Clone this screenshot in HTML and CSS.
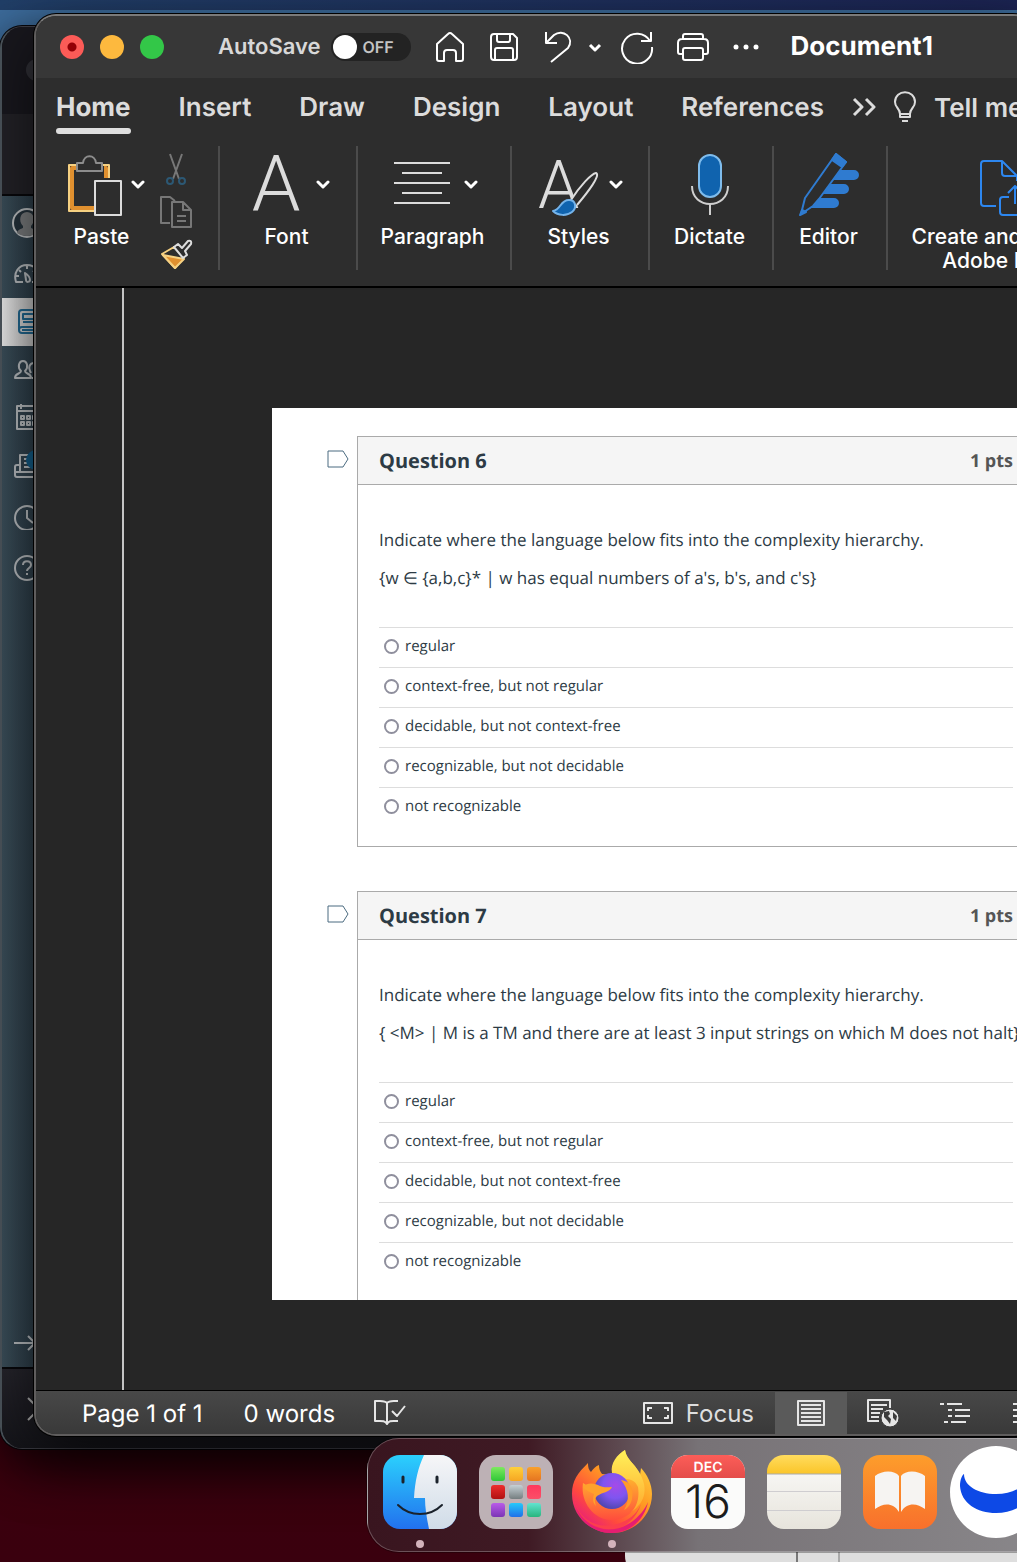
FILE: index.html
```html
<!DOCTYPE html>
<html lang="en">
<head>
    <meta charset="UTF-8">
    <meta name="viewport" content="width=device-width, initial-scale=1.0">
    <title>Document1</title>
    <link rel="stylesheet" href="styles.css">
</head>
<body>
<div class="desktop">
    <div class="sky"></div>

    <!-- browser window behind Word -->
    <div class="browser">
        <div class="browser-tabs"><span class="browser-tab"></span></div>
        <div class="browser-toolbar"></div>
        <nav class="browser-nav" aria-label="Courses">
            <a href="#" class="nav-item avatar" aria-label="Account"><svg width="30" height="30" viewBox="0 0 30 30"><circle cx="15" cy="15" r="14" fill="#24313a" stroke="#b9bcbe" stroke-width="2"/><path d="M5 25c1-4 4-4 6-5v-2c-5-5-3-14 4-14s9 9 4 14v2c2 1 5 1 6 5-5 4-15 4-20 0z" fill="#77797b" stroke="none"/></svg></a>
            <a href="#" class="nav-item" aria-label="Dashboard"><svg width="28" height="20" viewBox="0 0 28 20"><path d="M9 18H2C-1 8 5 1 13 1s14 7 12 17h-7M13 2v3M5 6l2 2M2 12h3M21 6l-2 2M11 9c3 2 5 5 5 7s-4 3-4 0z"/></svg></a>
            <a href="#" class="nav-item active" aria-label="Courses"><svg width="26" height="26" viewBox="0 0 26 26"><path d="M30 1H8Q5 1 5 4v17q0 3 3 3h22M5 21q0-3 3-3h22M8 21h22M9 5h14v5H9zM9 13h10"/></svg></a>
            <a href="#" class="nav-item" aria-label="Groups"><svg width="28" height="20" viewBox="0 0 28 20"><path d="M1 18c0-5 6-4 6-7-4-4-2-10 2-10s6 6 2 10c0 3 6 2 6 7zM17 13l-1-2c-2-4 0-8 4-8s5 6 2 9c0 2 4 2 4 6h-8"/></svg></a>
            <a href="#" class="nav-item" aria-label="Calendar"><svg width="28" height="28" viewBox="0 0 28 28"><path d="M3 2h24v23H3zM3 7h24M7 0v5M20 0v5M7 12h3v3H7zM13 12h3v3h-3zM19 12h3v3h-3zM7 18h3v3H7zM13 18h3v3h-3zM19 18h3v3h-3z"/></svg></a>
            <a href="#" class="nav-item" aria-label="Inbox"><svg width="30" height="26" viewBox="0 0 30 26"><path d="M6 18V2h16v16M10 6h8M10 10h8M10 14h8M6 12H3q-2 0-2 2v8q0 2 2 2h26M1 19h5v-5M6 19h20"/></svg><span class="nav-badge"></span></a>
            <a href="#" class="nav-item tall" aria-label="History"><svg width="28" height="28" viewBox="0 0 28 28"><circle cx="13" cy="16" r="12"/><path d="M13 8v8l6 5"/></svg></a>
            <a href="#" class="nav-item tall" aria-label="Help"><svg width="28" height="28" viewBox="0 0 28 28"><circle cx="13" cy="14" r="12"/><path d="M9 11c0-5 8-5 8 0 0 3-4 3-4 6M13 19v2"/></svg></a>
            <a href="#" class="nav-item last" aria-label="Expand"><svg width="28" height="20" viewBox="0 0 28 20"><path d="M0 10h20M14 3l7 7-7 7"/></svg></a>
        </nav>
        <div class="browser-foot"><svg width="28" height="28" viewBox="0 0 28 28"><path d="M2 3l22 22M24 3L2 25"/></svg></div>
    </div>

    <!-- lower window, mostly under the dock -->
    <div class="sheet"><span></span><span></span></div>

    <div class="word">
        <header class="titlebar">
            <div class="lights">
                <button class="light red" aria-label="Close"></button>
                <button class="light yellow" aria-label="Minimize"></button>
                <button class="light green" aria-label="Zoom"></button>
            </div>
            <label class="autosave">AutoSave
                <input type="checkbox" class="switch-input">
                <span class="switch">OFF</span>
            </label>
            <div class="quick">
                <button aria-label="Home"><svg width="32" height="32" viewBox="0 0 32 32"><path d="M3 13 14 3q2-2 4 0l11 10v15q0 2-2 2h-5v-8q0-3-3-3h-6q-3 0-3 3v8H5q-2 0-2-2z"/></svg></button>
                <button aria-label="Save"><svg width="32" height="32" viewBox="0 0 32 32"><path d="M6 3h19l4 4v19q0 3-3 3H6q-3 0-3-3V6q0-3 3-3zM9 3v6q0 2 2 2h9q2 0 2-2V3M7 29V19q0-2 2-2h14q2 0 2 2v10"/></svg></button>
                <button aria-label="Undo"><svg width="32" height="32" viewBox="0 0 32 32"><path d="M4 1v11h11M4 12l8-8c9-7 21 3 14 13L9 31"/></svg></button>
                <button class="narrow" aria-label="Undo history"><svg width="14" height="32" viewBox="0 0 14 32"><path d="M2 14l5 5 5-5" stroke-width="3"/></svg></button>
                <button aria-label="Redo"><svg width="34" height="34" viewBox="0 0 34 34"><path d="M31 2v9H21M30 11A15 15 0 1 0 32 17"/></svg></button>
                <button aria-label="Print"><svg width="34" height="32" viewBox="0 0 34 32"><path d="M7 8V5q0-2 2-2h16q2 0 2 2v3M7 23H4q-2 0-2-2v-9q0-4 4-4h22q4 0 4 4v9q0 2-2 2h-3M9 17h16q2 0 2 2v8q0 2-2 2H9q-2 0-2-2v-8q0-2 2-2z"/></svg></button>
                <button aria-label="More"><svg width="28" height="32" viewBox="0 0 28 32"><g fill="#fff" stroke="none"><circle cx="4" cy="16" r="2.500"/><circle cx="14" cy="16" r="2.500"/><circle cx="24" cy="16" r="2.500"/></g></svg></button>
            </div>
            <h1 class="doc-title">Document1</h1>
        </header>

        <nav class="tabs">
            <a href="#" class="tab current">Home</a>
            <a href="#" class="tab">Insert</a>
            <a href="#" class="tab">Draw</a>
            <a href="#" class="tab">Design</a>
            <a href="#" class="tab">Layout</a>
            <a href="#" class="tab">References</a>
            <button class="more-tabs" aria-label="More tabs"><svg width="24" height="20" viewBox="0 0 24 20"><path d="M2 2l8 8-8 8M14 2l8 8-8 8" stroke="#dcdcdc" stroke-width="3"/></svg></button>
            <button class="tell"><svg width="22" height="32" viewBox="0 0 22 32"><path d="M6 23c0-6-5-6-5-12 0-13 20-13 20 0 0 6-5 6-5 12v3H6zM6 23h10M8 30h6" stroke="#dcdcdc"/></svg>Tell me</button>
        </nav>

        <div class="ribbon">
            <div class="group paste">
                <button class="tool">
                    <span class="tool-icon"><svg width="56" height="64" viewBox="0 0 56 64"><path d="M17 12H3v46h26M34 12h9v13" stroke="#f6d182" stroke-width="2"/><path d="M12 15H6v40h23M38 15h2v10" stroke="#e0902f" stroke-width="4"/><path d="M11 10h6c1-9 12-9 13 0h6v8H11z" fill="#2d2d2d" stroke="#8d8d8d" stroke-width="2"/><path d="M29 28h26v34H29z" fill="#2d2d2d" stroke="#dcdcdc" stroke-width="2"/></svg><svg class="chev" width="14" height="10" viewBox="0 0 14 10"><path d="M2 2l5 5 5-5"/></svg></span>
                    <span class="tool-label">Paste</span>
                </button>
                <div class="clip-tools">
                    <button aria-label="Cut"><svg width="32" height="34" viewBox="0 0 32 34"><path d="M10 2l9 25M22 2l-9 25" stroke="#777"/><circle cx="10" cy="29" r="3" stroke="#2c5874"/><circle cx="22" cy="29" r="3" stroke="#2c5874"/></svg></button>
                    <button aria-label="Copy"><svg width="32" height="34" viewBox="0 0 32 34"><path d="M10 28H1V2h9l5 4M12 7h11l8 8v17H12zM23 7v8h8M17 21h9M17 26h9" stroke="#777"/></svg></button>
                    <button aria-label="Format painter"><svg width="34" height="32" viewBox="0 0 34 32"><path d="M14 9L2 16l13 14 9-11z" stroke="#f6d182"/><path d="M3 17l21 4-9 9z" fill="#e0902f" stroke="#f6d182"/><path d="M14 9l4-3 4 4 6-7q4-1 3 3l-6 7 2 4-4 3z" fill="#2d2d2d" stroke="#dcdcdc"/></svg></button>
                </div>
            </div>
            <div class="group font">
                <button class="tool">
                    <span class="tool-icon"><span class="letter">A</span><svg class="chev" width="14" height="10" viewBox="0 0 14 10"><path d="M2 2l5 5 5-5"/></svg></span>
                    <span class="tool-label">Font</span>
                </button>
            </div>
            <div class="group paragraph">
                <button class="tool">
                    <span class="tool-icon"><svg width="56" height="64" viewBox="0 0 56 64"><path d="M0 10h56M8 20h40M0 30h56M8 40h40M0 50h56" stroke="#dcdcdc"/></svg><svg class="chev" width="14" height="10" viewBox="0 0 14 10"><path d="M2 2l5 5 5-5"/></svg></span>
                    <span class="tool-label">Paragraph</span>
                </button>
            </div>
            <div class="group styles">
                <button class="tool">
                    <span class="tool-icon"><svg width="62" height="64" viewBox="0 0 62 64"><text x="1" y="55" class="svg-letter">A</text><path d="M34 47C43 33 54 21 59 20c5 2-8 19-19 32" fill="#2d2d2d" stroke="#dcdcdc"/><path d="M16 58c8-1 7-11 16-11 7 0 8 8 3 12-5 4-14 4-19-1z" fill="#1063ae" stroke="#74b3ea"/></svg><svg class="chev" width="14" height="10" viewBox="0 0 14 10"><path d="M2 2l5 5 5-5"/></svg></span>
                    <span class="tool-label">Styles</span>
                </button>
            </div>
            <div class="group dictate">
                <button class="tool">
                    <span class="tool-icon"><svg width="40" height="64" viewBox="0 0 40 64"><rect x="8" y="2" width="22" height="42" rx="11" fill="#1063ae" stroke="#7fbcec"/><path d="M1 33c0 24 36 24 36 0M19 51v11" stroke="#cfcfcf"/></svg></span>
                    <span class="tool-label">Dictate</span>
                </button>
            </div>
            <div class="group editor">
                <button class="tool">
                    <span class="tool-icon"><svg width="62" height="64" viewBox="0 0 62 64"><path d="M38 17h17a5 5 0 0 1 0 10H30zM28 31h17a5 5 0 0 1 0 10H20zM18 45h17a5 5 0 0 1 0 10H10z" fill="#2f7bd0" stroke="none"/><path d="M37 1l10 8-27 37-6 7-12 8 4-16z" fill="#2d2d2d" stroke="#2f7bd0"/><path d="M37 1l10 8-4 5-10-7zM3 57l4 2-6 3z" fill="#2f7bd0" stroke="#2f7bd0"/></svg></span>
                    <span class="tool-label">Editor</span>
                </button>
            </div>
            <div class="group adobe">
                <button class="tool">
                    <span class="tool-icon"><svg width="58" height="64" viewBox="0 0 58 64"><path d="M16 53H4q-3 0-3-3V11q0-3 3-3h18l15 15v5M22 8v12q0 3 3 3h12M29 44h-6q-3 0-3 3v12q0 3 3 3h28q3 0 3-3V47q0-3-3-3h-6M35 51V34M28 40l7-7 7 7" stroke="#2d87f0"/></svg></span>
                    <span class="tool-label">Create and Share<br>Adobe PDF</span>
                </button>
            </div>
        </div>

        <main class="canvas">
            <div class="page">
                <section class="question">
                    <button class="flag" aria-label="Flag question 6"><svg width="22" height="18" viewBox="0 0 22 18"><path d="M1 1h15l5 8-5 8H1z"/></svg></button>
                    <div class="question-box">
                        <div class="question-head">
                            <h2>Question 6</h2>
                            <span class="points">1 pts</span>
                        </div>
                        <div class="question-body">
                            <p>Indicate where the language below fits into the complexity hierarchy.</p>
                            <p>{w ∈ {a,b,c}* | w has equal numbers of a's, b's, and c's}</p>
                            <div class="answers">
                                <label class="answer"><input type="radio" name="q6">regular</label>
                                <label class="answer"><input type="radio" name="q6">context-free, but not regular</label>
                                <label class="answer"><input type="radio" name="q6">decidable, but not context-free</label>
                                <label class="answer"><input type="radio" name="q6">recognizable, but not decidable</label>
                                <label class="answer"><input type="radio" name="q6">not recognizable</label>
                            </div>
                        </div>
                    </div>
                </section>
                <section class="question cut">
                    <button class="flag" aria-label="Flag question 7"><svg width="22" height="18" viewBox="0 0 22 18"><path d="M1 1h15l5 8-5 8H1z"/></svg></button>
                    <div class="question-box">
                        <div class="question-head">
                            <h2>Question 7</h2>
                            <span class="points">1 pts</span>
                        </div>
                        <div class="question-body">
                            <p>Indicate where the language below fits into the complexity hierarchy.</p>
                            <p>{ &lt;M&gt; | M is a TM and there are at least 3 input strings on which M does not halt}</p>
                            <div class="answers">
                                <label class="answer"><input type="radio" name="q7">regular</label>
                                <label class="answer"><input type="radio" name="q7">context-free, but not regular</label>
                                <label class="answer"><input type="radio" name="q7">decidable, but not context-free</label>
                                <label class="answer"><input type="radio" name="q7">recognizable, but not decidable</label>
                                <label class="answer"><input type="radio" name="q7">not recognizable</label>
                            </div>
                        </div>
                    </div>
                </section>
            </div>
        </main>

        <footer class="statusbar">
            <span>Page 1 of 1</span>
            <span class="words">0 words</span>
            <button class="proof" aria-label="Proofing"><svg width="32" height="28" viewBox="0 0 32 28"><path d="M13 4c-2-3-6-2-12-2v20c6 0 10-1 12 3 2-4 5-3 11-3M13 4v20M13 4c2-3 6-2 11-2M18 12l5 5 8-10"/></svg></button>
            <div class="views">
                <button class="focus"><svg width="30" height="22" viewBox="0 0 30 22"><path d="M1 1h28v20H1zM9 6H5v3M21 6h4v3M9 16H5v-3M21 16h4v-3"/></svg>Focus</button>
                <button class="view on" aria-label="Print layout"><svg width="28" height="26" viewBox="0 0 28 26"><path d="M1 1h26v24H1zM4 5h20M4 9h20M4 13h20M4 17h20M4 21h20"/></svg></button>
                <button class="view" aria-label="Web layout"><svg width="32" height="28" viewBox="0 0 32 28"><path d="M12 22H1V1h22v8M4 6h16M4 10h12M4 14h9M4 18h8"/><circle cx="23" cy="19" r="9" fill="#e6e6e6" stroke="#3c3c3c" stroke-width="1"/><path d="M17 13l5-1 1 3-2 2 3 3-1 5-3-4-3-3zM26 13l4 4-1 5-3-3z" fill="#3c3c3c" stroke="none"/></svg></button>
                <button class="view" aria-label="Outline"><svg width="30" height="22" viewBox="0 0 30 22"><path d="M0 2h4M7 2h15M8 8h4M15 8h15M8 14h4M15 14h15M4 20h4M11 20h15"/></svg></button>
                <button class="view" aria-label="Draft"><svg width="26" height="22" viewBox="0 0 26 22"><path d="M0 2h24M0 8h16M0 14h24M0 20h16"/></svg></button>
            </div>
        </footer>
    </div>

    <nav class="dock" aria-label="Dock">
        <a href="#" class="app running" aria-label="Finder">
            <svg width="74" height="74" viewBox="0 0 74 74"><defs><linearGradient id="fb" x2="0" y2="1"><stop stop-color="#2bd0fd"/><stop offset="1" stop-color="#2271ee"/></linearGradient><linearGradient id="fw" x2="0" y2="1"><stop stop-color="#f6f6f8"/><stop offset="1" stop-color="#d0dce8"/></linearGradient><clipPath id="fc"><rect width="74" height="74" rx="17"/></clipPath></defs><g clip-path="url(#fc)"><path fill="url(#fb)" d="M0 0h74v74H0z"/><path fill="url(#fw)" d="M41 0c-6 13-9 26-10 43h11c0 11 2 21 4 31h28V0z"/></g><path d="M20 22v5M54 22v5" fill="none" stroke="#1b222b" stroke-width="3" stroke-linecap="round"/><path d="M15 50c12 12 32 12 44 0" fill="none" stroke="#1b222b" stroke-width="2" stroke-linecap="round"/></svg>
        </a>
        <a href="#" class="app" aria-label="Launchpad">
            <span class="launchpad"><i class="c1"></i><i class="c2"></i><i class="c3"></i><i class="c4"></i><i class="c5"></i><i class="c6"></i><i class="c7"></i><i class="c8"></i><i class="c9"></i></span>
        </a>
        <a href="#" class="app wide running" aria-label="Firefox">
            <svg width="82" height="84" viewBox="0 0 82 84"><defs><linearGradient id="fx" x1="1" x2=".2" y2="1"><stop stop-color="#ffe84a"/><stop offset=".45" stop-color="#ff9a22"/><stop offset=".75" stop-color="#ff4a3d"/><stop offset="1" stop-color="#e31587"/></linearGradient><linearGradient id="fy" x2="0" y2="1"><stop stop-color="#fff25a"/><stop offset="1" stop-color="#ffa52b"/></linearGradient><linearGradient id="fo" x2="0" y2="1"><stop stop-color="#ffb02e"/><stop offset="1" stop-color="#ff4d3d"/></linearGradient><radialGradient id="fp" cx=".6" cy=".35" r=".7"><stop stop-color="#a44be8"/><stop offset=".5" stop-color="#7f55f0"/><stop offset="1" stop-color="#4a45a8"/></radialGradient></defs><path d="M17 14c0 5 1 7 3 9 2-3 5-6 8-7 0 4 1 6 3 9l11 1C40 16 46 6 54 1c2 12 10 12 15 25l1-7c6 6 11 16 11 26 0 22-18 39-40 39S1 67 1 45c0-14 6-21 16-31z" fill="url(#fx)"/><path d="M41 24C39 14 46 6 54 1c2 12 15 16 19 34 3 15-6 24-16 30 6-12 0-30-16-41z" fill="url(#fy)"/><path d="M3 46c2 24 23 35 43 29 11-3 20-10 24-20-5 16-20 28-36 25C16 77 4 64 3 46z" fill="#fb3f4c"/><path d="M5 58c9 22 34 29 54 16 9-6 15-14 18-21-3 17-18 31-36 31C24 84 10 74 5 58z" fill="#e51d72"/><path d="M12 34c-3 20 12 38 30 37 17-1 28-14 25-33-3-7-8-8-13-8L22 40z" fill="url(#fo)"/><circle cx="41" cy="42" r="18" fill="url(#fp)"/><path d="M12 38c4-5 12-4 17-1 4 2 9 1 12 1-2 5-9 5-15 9-3 3-2 7-1 10-4-4-3-8-2-12-4-2-9-4-11-7z" fill="#ffa12c"/><path d="M50 31c9 1 13 8 11 19-1 5-4 9-8 11 6-10 5-20-3-30z" fill="#ff9a2b"/></svg>
        </a>
        <a href="#" class="app calendar" aria-label="Calendar"><span class="month">DEC</span><span class="day">16</span></a>
        <a href="#" class="app notes" aria-label="Notes"></a>
        <a href="#" class="app books" aria-label="Books"><svg width="52" height="42" viewBox="0 0 52 42"><path d="M25 5C21-1 8-1 1 5v33c8-6 18-7 24 3zM27 5c4-6 17-6 24 0v33c-8-6-18-7-24 3z" fill="#f6f4f2"/></svg></a>
        <a href="#" class="app round" aria-label="Browser"><svg width="92" height="92" viewBox="0 0 92 92"><circle cx="46" cy="46" r="46" fill="#fff"/><path d="M14 28c-2 1-4 6-4 12 1 17 17 27 36 27s35-10 36-27c0-6-2-11-4-12-1 12-14 20-32 20S14 40 14 28z" fill="#0d49e6"/></svg></a>
    </nav>
</div>
</body>
</html>
```
FILE: styles.css
```css
* { margin: 0; padding: 0; box-sizing: border-box; }
body {
    font-family: Inter, "Liberation Sans", sans-serif;
    color: #fff;
    text-rendering: geometricPrecision;
}
button {
    background: none;
    border: none;
    color: inherit;
    font: inherit;
    cursor: pointer;
}
a { color: inherit; text-decoration: none; }
svg {
    display: block;
    flex-shrink: 0;
    fill: none;
    stroke: #fff;
    stroke-width: 2;
    stroke-linejoin: round;
}
.desktop {
    position: relative;
    height: 100vh;
    overflow: hidden;
    background: linear-gradient(180deg, #3d6c9c 0%, #3d6c9c 20%, #40000f 40%, #3a000e 100%);
}
.sky {
    height: 10px;
    background: linear-gradient(90deg, #213f68, #1c2453);
}

/* browser window */
.browser {
    position: absolute;
    top: 26px;
    bottom: 113px;
    left: 0;
    right: -18px;
    display: flex;
    flex-direction: column;
    overflow: hidden;
    background: #15151a;
    border: 1px solid #3c3c44;
    border-left: 2px solid #4b545b;
    border-radius: 22px;
    box-shadow: 0 16px 50px rgba(0,0,0,0.7), 0 0 0 1px #08080c;
}
.browser-tabs {
    height: 87px;
    padding: 32px 24px;
    background: #18171d;
}
.browser-tab {
    display: block;
    width: 180px;
    height: 22px;
    border-radius: 11px;
    background: #2e2e34;
}
.browser-toolbar {
    height: 82px;
    background: #222126;
    border-bottom: 2px solid #08080b;
}
.browser-nav {
    display: flex;
    flex: 1;
    flex-direction: column;
    width: 108px;
    background: linear-gradient(90deg, #394c57 0px, #2c3c47 32px);
}
.browser-nav svg { stroke: #b4b8bb; }
.nav-item {
    position: relative;
    display: flex;
    align-items: center;
    height: 48px;
    padding-left: 12px;
}
.nav-item.avatar { height: 54px; padding-left: 10px; }
.nav-item.tall { height: 52px; }
.nav-item.active { background: linear-gradient(90deg, #e4e4e4, #bcbcbc 32px); }
.nav-item.active svg { stroke: #21658c; }
.nav-item.last { margin-top: auto; }
.nav-badge {
    position: absolute;
    top: 8px;
    left: 24px;
    width: 20px;
    height: 20px;
    border-radius: 50%;
    background: #125a84;
}
.browser-foot {
    height: 81px;
    padding: 26px 24px;
    border-top: 2px solid #08080b;
    background: linear-gradient(180deg, #24232a, #15151a);
}
.browser-foot svg { stroke: #aaa; }

/* lower window */
.sheet {
    position: absolute;
    top: calc(100% - 124px);
    left: 625px;
    right: -18px;
    height: 140px;
    display: flex;
    gap: 40px;
    padding-left: 171px;
    border-radius: 22px;
    background: #dedede;
}
.sheet span { width: 2px; background: #777; }
.sheet span + span { background: #aaa; }

/* word window */
.word {
    position: absolute;
    top: 14px;
    bottom: 126px;
    left: 34px;
    right: -18px;
    display: flex;
    flex-direction: column;
    overflow: hidden;
    background: #262626;
    border: 2px solid #5f5d5d;
    border-top-color: #7a7a7a;
    border-radius: 22px;
    box-shadow: 0 0 0 1px #000, 0 24px 60px rgba(0,0,0,0.6);
    white-space: nowrap;
}
.titlebar {
    display: flex;
    flex-shrink: 0;
    align-items: center;
    height: 62px;
    padding: 0 0 1px 24px;
    background: #373737;
}
.lights { display: flex; gap: 16px; }
.light {
    width: 24px;
    height: 24px;
    border-radius: 50%;
}
.red { background: radial-gradient(circle, #930006 0 4px, #fc5b57 5px); }
.yellow { background: #fdb93e; }
.green { background: #33c748; }
.autosave {
    display: flex;
    align-items: center;
    gap: 10px;
    margin-left: 54px;
    color: #d8d8d8;
    font-size: 22px;
    font-weight: 600;
}
.switch-input { position: absolute; opacity: 0; }
.switch {
    display: flex;
    align-items: center;
    gap: 6px;
    height: 28px;
    width: 80px;
    padding-left: 2px;
    border-radius: 14px;
    background: #232323;
    color: #c4c4c4;
    font-size: 16px;
}
.switch::before {
    content: "";
    width: 24px;
    height: 24px;
    border-radius: 50%;
    background: #fff;
}
.quick {
    display: flex;
    align-items: center;
    gap: 22px;
    margin-left: 23px;
}
.quick .narrow { margin: 0 -4px 0 -8px; }
.doc-title {
    margin-left: 31px;
    font-size: 26px;
    font-weight: 700;
}
.tabs {
    display: flex;
    flex-shrink: 0;
    align-items: center;
    gap: 48px;
    height: 62px;
    padding: 0 0 4px 20px;
    background: #2d2d2d;
    color: #dcdcdc;
    font-size: 26px;
    font-weight: 600;
}
.tab {
    padding: 9px 0 7px;
    line-height: 32px;
}
.tab.current {
    display: flex;
    flex-direction: column;
    gap: 4px;
    padding-bottom: 0;
    margin-bottom: -3px;
    font-weight: 700;
}
.tab.current::after {
    content: "";
    height: 6px;
    border-radius: 3px;
    background: #dedede;
}
.more-tabs { margin-left: -20px; }
.tell {
    display: flex;
    align-items: center;
    gap: 18px;
    margin-left: -30px;
}

/* ribbon */
.ribbon {
    display: flex;
    flex-shrink: 0;
    height: 148px;
    padding: 6px 0 16px;
    background: #2d2d2d;
    border-bottom: 2px solid #000;
}
.group {
    display: flex;
    flex-shrink: 0;
    justify-content: center;
    border-right: 2px solid #4b4b4b;
}
.group.paste { width: 184px; justify-content: flex-start; padding-left: 30px; gap: 15px; }
.group.font { width: 138px; }
.group.paragraph { width: 154px; }
.group.styles { width: 138px; }
.group.dictate { width: 124px; }
.group.editor { width: 114px; }
.group.adobe { width: 224px; border-right: none; }
.tool {
    display: flex;
    flex-direction: column;
    align-items: center;
    padding-top: 7px;
    font-size: 21px;
    font-weight: 500;
    line-height: 24px;
}
.tool-icon {
    display: flex;
    align-items: center;
    gap: 10px;
    height: 64px;
}
.paste .tool-icon { gap: 9px; }
.font .tool-icon,
.paragraph .tool-icon { gap: 14px; padding-left: 4px; }
.adobe .tool-icon { padding-left: 18px; }
.tool-label { margin: 8px 3px 0 0; }
.paste .tool-label { margin-right: 8px; }
.letter {
    width: 52px;
    color: #dcdcdc;
    font-family: Roboto, Inter, sans-serif;
    font-size: 78px;
    font-weight: 300;
    line-height: 64px;
}
.svg-letter {
    fill: #dcdcdc;
    stroke: none;
    font-family: Roboto, Inter, sans-serif;
    font-size: 66px;
    font-weight: 300;
}
.chev { stroke-width: 3; stroke-linecap: round; }
.clip-tools {
    display: flex;
    flex-direction: column;
    gap: 9px;
    padding-top: 6px;
}

/* document */
.canvas {
    flex: 1;
    min-height: 0;
    overflow: hidden;
    margin-left: 86px;
    padding: 120px 0 0 148px;
    border-left: 2px solid #c4c4c4;
}
.page {
    padding: 28px 0 0 55px;
    background: #fff;
    color: #2d3b45;
    font-family: "Open Sans", "Noto Sans", sans-serif;
}
.question {
    display: flex;
    align-items: flex-start;
    gap: 8px;
    margin-bottom: 44px;
}
.question.cut { margin-bottom: 0; }
.flag { margin-top: 14px; }
.flag svg { stroke: #4b6b80; stroke-width: 1; }
.question-box {
    flex: 1;
    min-width: 0;
    border: 1px solid #aaa;
}
.question.cut .question-box { border-bottom: none; }
.question.cut .question-body { padding-bottom: 18px; }
.question-head {
    display: flex;
    align-items: center;
    justify-content: space-between;
    height: 48px;
    padding: 0 19px 0 21px;
    background: #f5f5f5;
    border-bottom: 1px solid #aaa;
}
.question-head h2 { font-size: 20px; font-weight: 700; }
.points { color: #555; font-size: 18px; font-weight: 700; }
.question-body { padding: 43px 19px 19px 21px; }
.question-body p {
    margin-bottom: 14px;
    font-size: 17px;
    line-height: 24px;
}
.answers { margin-top: 37px; }
.answer {
    display: flex;
    align-items: center;
    gap: 6px;
    height: 40px;
    padding: 0 0 4px 5px;
    border-top: 1px solid #ddd;
    font-size: 15px;
}
.answer input {
    appearance: none;
    width: 15px;
    height: 15px;
    margin-top: 2px;
    border: 2px solid #8f8f9d;
    border-radius: 50%;
}

/* status bar */
.statusbar {
    display: flex;
    flex-shrink: 0;
    align-items: center;
    height: 44px;
    padding: 1px 0 0 46px;
    border-top: 1px solid #000;
    background: linear-gradient(180deg, #484848, #393939);
    font-size: 24px;
}
.statusbar svg { stroke: #e6e6e6; }
.words { margin-left: 41px; }
.proof { margin-left: 39px; }
.views {
    display: flex;
    align-items: stretch;
    height: 100%;
    margin-left: auto;
    color: #dedede;
}
.focus {
    display: flex;
    align-items: center;
    gap: 13px;
    margin-right: 21px;
}
.view {
    display: flex;
    align-items: center;
    justify-content: center;
    width: 72px;
}
.view:last-child {
    justify-content: flex-start;
    width: 42px;
    padding-left: 22px;
}
.view.on { background: #5a5a5a; }

/* dock */
.dock {
    position: absolute;
    bottom: 10px;
    left: 367px;
    right: -60px;
    display: flex;
    gap: 22px;
    height: 114px;
    padding: 16px 15px;
    border: 1px solid rgba(255,255,255,0.25);
    border-radius: 32px;
    background: linear-gradient(90deg, #39151f 0px, #3f1a24 160px, #777276 330px, #8b898c 100%);
    box-shadow: 0 0 0 1px rgba(0,0,0,0.3);
}
.app {
    position: relative;
    display: block;
    flex-shrink: 0;
    width: 74px;
    height: 74px;
    border-radius: 17px;
}
.app svg { stroke: none; }
.app.running::after {
    content: "";
    position: absolute;
    top: 85px;
    left: 33px;
    width: 8px;
    height: 8px;
    border-radius: 50%;
    background: #d3b3bb;
}
.app.wide svg { margin: -6px -4px; }
.launchpad {
    display: grid;
    grid-template-columns: repeat(3, 14px);
    gap: 4px;
    place-content: center;
    height: 74px;
    border-radius: 17px;
    background: #bdb1b5;
}
.launchpad i { height: 14px; border-radius: 3px; }
.c1 { background: linear-gradient(#7ee95f, #2fc737); }
.c2 { background: linear-gradient(#ffd03a, #f6a623); }
.c3 { background: linear-gradient(#f9a12c, #e57421); }
.c4 { background: linear-gradient(#ee2c2c, #b01212); }
.c5 { background: linear-gradient(#c5d0d5, #757e80); }
.c6 { background: linear-gradient(#ff375c, #fb4f68); }
.c7 { background: linear-gradient(#b95be8, #7b35b5); }
.c8 { background: linear-gradient(#24c9fb, #2070e8); }
.c9 { background: linear-gradient(#62e3d0, #29b57d); }
.calendar {
    overflow: hidden;
    background: #fbfbfa;
    text-align: center;
}
.month {
    display: block;
    height: 23px;
    background: linear-gradient(#fc5d58, #e44d4a);
    font-size: 14px;
    font-weight: 600;
    line-height: 25px;
}
.day {
    display: block;
    color: #1c1c1c;
    font-size: 46px;
    font-weight: 300;
    line-height: 48px;
}
.notes {
    background:
        linear-gradient(#cfcdd0, #cfcdd0) 0 36px / 100% 1px no-repeat,
        linear-gradient(#cfcdd0, #cfcdd0) 0 55px / 100% 1px no-repeat,
        linear-gradient(#ffdc5e 0px, #fbc62b 18px, #aaa 19px, #f6f5f2 20px, #e7e4dc 74px);
}
.books {
    display: flex;
    align-items: center;
    justify-content: center;
    background: linear-gradient(#fd9d2b, #f8702c);
}
.round svg { margin: -9px; }
```
